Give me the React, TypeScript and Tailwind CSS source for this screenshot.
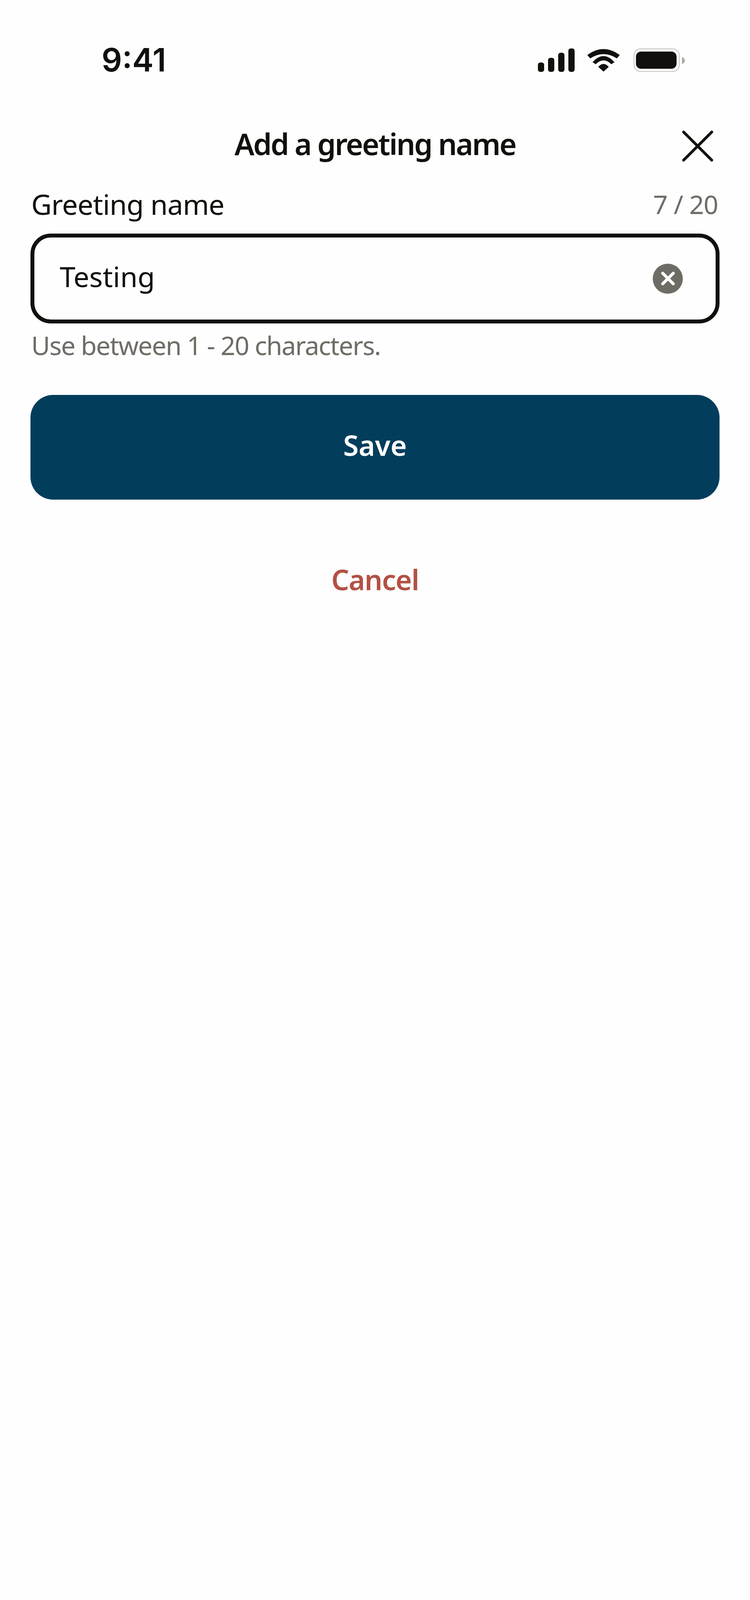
import { X } from "lucide-react";

function StatusIcons() {
  return (
    <div className="flex items-center">
      <svg width="94" height="60" viewBox="0 0 94 60" fill="#11100c">
        <rect x="0" y="36" width="16" height="24" rx="6" />
        <rect x="26" y="24" width="16" height="36" rx="6" />
        <rect x="52" y="11" width="16" height="49" rx="6" />
        <rect x="78" y="0" width="16" height="60" rx="6" />
      </svg>
      <svg className="ml-[32px]" width="84" height="60" viewBox="0 0 84 60" fill="#11100c" stroke="#11100c" strokeWidth="1" strokeLinejoin="round">
        <path d="M1 17Q42 -13 83 17L76 25Q42 3 8 25Z" />
        <path d="M14.5 35Q42 5 69.5 35L62 40Q42 20 22 40Z" />
        <path d="M29 47Q42 33 55 47L42 59Z" />
      </svg>
      <svg className="ml-[35px]" width="131" height="60" viewBox="0 0 131 60">
        <rect x="1" y="1" width="116" height="58" rx="17" fill="none" stroke="#c4c3c1" strokeWidth="2" />
        <rect x="6" y="8" width="104" height="44" rx="13" fill="#11100c" />
        <path d="M124 22C129 24 131 27 131 31S129 38 124 40Z" fill="#a9a8a6" />
      </svg>
    </div>
  );
}

export default function App() {
  return (
    <div className="h-[4174px] bg-[#fefefe] overflow-hidden text-[#11100c] font-['Noto_Sans',sans-serif]">
      {/* Status bar */}
      <div className="flex items-center justify-between pl-[260px] pr-[167px] pt-[124px]">
        <span className="font-['Inter',sans-serif] text-[82px] leading-[60px] font-semibold">9:41</span>
        <StatusIcons />
      </div>

      {/* Header */}
      <div className="grid grid-cols-[1fr_auto_1fr] items-center mt-[118px] pl-[62px] pr-[62px]">
        <div />
        <h1 className="text-[76px] leading-[88px] font-semibold tracking-[-3px] pb-[12px]">Add a greeting name</h1>
        <button className="justify-self-end">
          <X className="block w-[144px] h-[144px]" strokeWidth={1.2} color="#11100c" />
        </button>
      </div>

      <div className="px-[78px]">
        {/* Label row */}
        <div className="flex items-center justify-between mt-[36px]">
          <span className="text-[72px] leading-[80px] pl-[2px] tracking-[-1px]">Greeting name</span>
          <span className="text-[66px] leading-[80px] text-[#6f6c66] pr-[4px] tracking-[-1px]">7 / 20</span>
        </div>

        {/* Input */}
        <div className="flex items-center justify-between h-[230px] mt-[36px] border-[10px] border-[#11100c] rounded-[52px] pl-[65px] pr-[84px]">
          <span className="text-[72px] pb-[12px]">Testing</span>
          <span className="flex items-center justify-center w-[77px] h-[77px] rounded-full bg-[#6f6c66]">
            <X className="w-[54px] h-[54px]" strokeWidth={3.4} color="#ffffff" />
          </span>
        </div>

        <p className="mt-[15px] pl-[2px] text-[66px] leading-[80px] text-[#6f6c66] tracking-[-1.8px]">Use between 1 - 20 characters.</p>

        {/* Actions */}
        <button className="flex items-center justify-center w-full h-[268px] mt-[88px] pb-[12px] rounded-[58px] bg-[#033d5c] text-white text-[72px] font-semibold">
          Save
        </button>
        <button className="block w-full mt-[156px] text-center text-[#b25144] text-[72px] leading-[96px] font-semibold tracking-[-1.4px]">
          Cancel
        </button>
      </div>
    </div>
  );
}
